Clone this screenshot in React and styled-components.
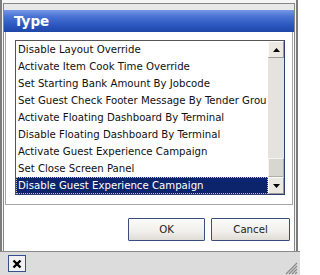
import styled, { createGlobalStyle } from "styled-components";

const GlobalStyle = createGlobalStyle`
  html, body {
    margin: 0;
    padding: 0;
    background: #fff;
  }
  body {
    font-family: "DejaVu Sans Condensed", "Liberation Sans", Arial, sans-serif;
  }
`;

const Screen = styled.div`
  width: 300px;
  height: 275px;
  display: flex;
  flex-direction: column;
  overflow: hidden;
`;

const Frame = styled.div`
  box-sizing: border-box;
  width: 298px;
  height: 251px;
  border-left: 2px solid #7c7c7c;
  border-right: 2px solid #7c7c7c;
  background: #f5f5f5;
  padding: 3px 1px 0 1px;
  display: flex;
`;

const Inner = styled.div`
  flex: 1;
  display: flex;
  flex-direction: column;
  border: 1px solid #868686;
  border-bottom: none;
  background: #e8e8e8;
  padding-top: 6px;
`;

const TitleBar = styled.div`
  height: 22px;
  display: flex;
  align-items: center;
  padding-left: 10px;
  color: #fff;
  font-family: "DejaVu Sans", "Liberation Sans", sans-serif;
  font-weight: bold;
  font-size: 13.5px;
  background: linear-gradient(to bottom, #7598e6 0%, #4a72d4 30%, #2a56be 70%, #1f47a8 100%);
`;

const Body = styled.div`
  flex: 1;
  background: #fff;
  padding: 0 1px;
  display: flex;
  flex-direction: column;
`;

const Panel = styled.div`
  border: 1px solid #a6a6a6;
  border-top: none;
  padding: 8px 7px 9px 9px;
`;

const ListBox = styled.div`
  box-sizing: border-box;
  width: 270px;
  height: 155px;
  display: flex;
  border: 1px solid #2c3f70;
  border-top-color: #555;
  border-left-color: #555;
  background: #fff;
`;

const Rows = styled.div`
  flex: 1;
  min-width: 0;
  display: flex;
  flex-direction: column;
`;

const Row = styled.div`
  box-sizing: border-box;
  height: 17px;
  line-height: 15px;
  padding-left: 1px;
  font-size: 11.3px;
  white-space: nowrap;
  overflow: hidden;
  color: ${(p) => (p.$selected ? "#fff" : "#111")};
  background: ${(p) => (p.$selected ? "#0b246b" : "transparent")};
  border: 1px ${(p) => (p.$selected ? "dotted #c9c39a" : "solid transparent")};
`;

const ScrollBar = styled.div`
  width: 16px;
  display: flex;
  flex-direction: column;
  background: #e6e3de;
`;

const ScrollButton = styled.div`
  box-sizing: border-box;
  height: 17px;
  display: flex;
  align-items: center;
  justify-content: center;
  background: #ece9e3;
  border: 1px solid;
  border-color: #fbfbfb #9a9a9a #9a9a9a #fbfbfb;
`;

const Track = styled.div`
  flex: 1;
  display: flex;
  flex-direction: column;
  justify-content: flex-end;
`;

const Thumb = styled.div`
  box-sizing: border-box;
  height: 19px;
  background: #d9d6d0;
  border: 1px solid;
  border-color: #f4f4f4 #b0aea8 #b0aea8 #f4f4f4;
`;

const Buttons = styled.div`
  display: flex;
  justify-content: flex-end;
  gap: 6px;
  margin-top: 13px;
  padding-right: 3px;
`;

const Button = styled.button`
  box-sizing: border-box;
  width: ${(p) => p.$w}px;
  height: 23px;
  padding: 0;
  font-family: "DejaVu Sans Condensed", "Liberation Sans", Arial, sans-serif;
  font-size: 11.3px;
  color: #222;
  border: 1px solid #3b4d7d;
  border-radius: 1px;
  background: linear-gradient(to bottom, #fbfbf9 0%, #f0efeb 60%, #dedcd5 100%);
`;

const Footer = styled.div`
  flex: 1;
  display: flex;
  justify-content: space-between;
  align-items: center;
  border-top: 1px solid #8a8a8a;
  background: #dcdcdc;
  padding-left: 8px;
`;

const CloseButton = styled.div`
  box-sizing: border-box;
  width: 18px;
  height: 17px;
  display: flex;
  align-items: center;
  justify-content: center;
  border: 1px solid #35508c;
  background: #f2f2f2;
`;

const Grip = styled.svg`
  align-self: flex-end;
  margin-right: 2px;
`;

const Arrow = ({ up }) => (
  <svg width="7" height="4" viewBox="0 0 7 4">
    <path d={up ? "M0 4 L3.5 0 L7 4 Z" : "M0 0 L3.5 4 L7 0 Z"} fill="#000" />
  </svg>
);

const items = [
  "Disable Layout Override",
  "Activate Item Cook Time Override",
  "Set Starting Bank Amount By Jobcode",
  "Set Guest Check Footer Message By Tender Group",
  "Activate Floating Dashboard By Terminal",
  "Disable Floating Dashboard By Terminal",
  "Activate Guest Experience Campaign",
  "Set Close Screen Panel",
  "Disable Guest Experience Campaign",
];

export default function App() {
  return (
    <>
      <GlobalStyle />
      <Screen>
        <Frame>
          <Inner>
            <TitleBar>Type</TitleBar>
            <Body>
              <Panel>
                <ListBox>
                  <Rows>
                    {items.map((t, i) => (
                      <Row key={t} $selected={i === items.length - 1}>
                        {t}
                      </Row>
                    ))}
                  </Rows>
                  <ScrollBar>
                    <ScrollButton>
                      <Arrow up />
                    </ScrollButton>
                    <Track>
                      <Thumb />
                    </Track>
                    <ScrollButton>
                      <Arrow />
                    </ScrollButton>
                  </ScrollBar>
                </ListBox>
              </Panel>
              <Buttons>
                <Button $w={77}>OK</Button>
                <Button $w={79}>Cancel</Button>
              </Buttons>
            </Body>
          </Inner>
        </Frame>
        <Footer>
          <CloseButton>
            <svg width="10" height="10" viewBox="0 0 10 10">
              <path d="M1.5 1.5 L8.5 8.5 M8.5 1.5 L1.5 8.5" stroke="#000" strokeWidth="2.4" />
            </svg>
          </CloseButton>
          <Grip width="14" height="14" viewBox="0 0 14 14">
            <path
              d="M13 2 L2 13 M13 5 L5 13 M13 8 L8 13 M13 11 L11 13"
              stroke="#8a8a8a"
              strokeWidth="1.2"
            />
          </Grip>
        </Footer>
      </Screen>
    </>
  );
}
